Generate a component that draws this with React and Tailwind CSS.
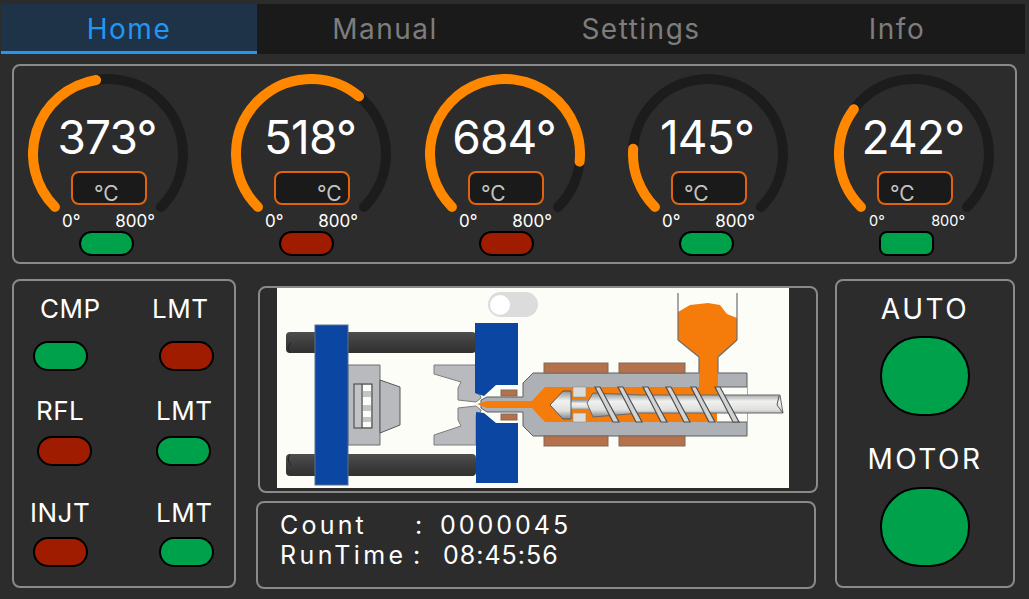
const R = 75;

function arcPoint(deg) {
  const a = ((deg - 90) * Math.PI) / 180;
  return [80 + R * Math.cos(a), 80 + R * Math.sin(a)];
}

function arcPath(from, to) {
  const [x1, y1] = arcPoint(from);
  const [x2, y2] = arcPoint(to);
  return `M${x1} ${y1} A${R} ${R} 0 ${to - from > 180 ? 1 : 0} 1 ${x2} ${y2}`;
}

function Led({ on, className = 'rounded-full' }) {
  return <div className={`w-[55px] h-full border-2 border-black ${className} ${on ? 'bg-[#00a14b]' : 'bg-[#a01c00]'}`} />;
}

function Gauge({ value, on, unitClass, ledClass, small, className = '' }) {
  const end = -135 + (value / 800) * 270;
  return (
    <div className={`w-[160px] shrink-0 flex flex-col items-center ${className}`}>
      <div className="relative w-[160px] h-[160px] shrink-0">
        <svg width="160" height="160" viewBox="0 0 160 160" fill="none" strokeWidth="10" strokeLinecap="round">
          <path d={arcPath(-135, 135)} stroke="#1c1c1c" />
          <path d={arcPath(-135, end)} stroke="#ff8800" />
        </svg>
        <div className="absolute left-0 right-[2px] top-[33px] text-center text-[46px] leading-[60px] text-white tracking-[-0.8px]">{value}°</div>
        <div className="absolute left-[43px] top-[97px] w-[76px] h-[34px] rounded-lg border-2 border-[#e0640f] bg-[#1a1a1a] text-[21px] leading-[30px] pt-[6px] text-[#c4c4c4] overflow-hidden">
          <span className={`block ${unitClass}`}>°C</span>
        </div>
      </div>
      <div className={`w-full flex justify-between -mt-[23px] h-[20px] leading-[20px] text-white ${small ? 'text-[14.5px] pl-[35px] pr-[29px]' : 'text-[17px] pl-[34px] pr-[33px]'}`}>
        <span>0°</span>
        <span>800°</span>
      </div>
      <div className={`h-[25px] shrink-0 ${ledClass}`}>
        <Led on={on} className={small ? 'rounded-lg' : 'rounded-full'} />
      </div>
    </div>
  );
}

function LedCell({ label, on, textClass, ledClass }) {
  return (
    <div className="h-[100px]">
      <div className={`text-[26px] leading-[28px] tracking-[0.5px] text-white whitespace-nowrap ${textClass}`}>{label}</div>
      <div className={`h-[30px] ${ledClass}`}>
        <Led on={on} />
      </div>
    </div>
  );
}

// injection unit, drawn in page coordinates so the numbers read off the screenshot
function Machine() {
  const flights = [595, 618, 643, 666, 691, 715];
  return (
    <svg className="block" width="512" height="200" viewBox="277 288 512 200">
      <defs>
        <linearGradient id="shaft" x1="0" y1="0" x2="0" y2="1">
          <stop offset="0" stopColor="#8f9294" />
          <stop offset="0.35" stopColor="#f1f2f0" />
          <stop offset="0.7" stopColor="#e0e1df" />
          <stop offset="1" stopColor="#84878a" />
        </linearGradient>
        <linearGradient id="bar" x1="0" y1="0" x2="0" y2="1">
          <stop offset="0" stopColor="#4e4e4e" />
          <stop offset="0.5" stopColor="#3d3d3d" />
          <stop offset="1" stopColor="#303030" />
        </linearGradient>
      </defs>
      <rect x="277" y="288" width="512" height="200" fill="#fdfdf8" />

      <rect x="286" y="332" width="190" height="21" rx="4" fill="url(#bar)" />
      <rect x="286" y="454" width="190" height="22" rx="4" fill="url(#bar)" />
      <path d="M291 343Q286 347 290 353" stroke="#222222" strokeWidth="1" fill="none" />
      <path d="M291 465Q286 460 290 454" stroke="#222222" strokeWidth="1" fill="none" />

      <path d="M348 365H380V445H348Z" fill="#b8babd" stroke="#6b6d70" />
      <path d="M380 380L400 387V425L380 433Z" fill="#b8babd" stroke="#55575a" />
      <rect x="354" y="384" width="18" height="44" fill="#c2c4c6" stroke="#3c3c3c" />
      <path d="M362 384V428" stroke="#3c3c3c" />
      <rect x="363" y="385" width="8" height="6" fill="#fdfdf8" />
      <rect x="363" y="397" width="8" height="8" fill="#fdfdf8" />
      <rect x="363" y="411" width="8" height="6" fill="#fdfdf8" />
      <rect x="363" y="422" width="8" height="5" fill="#fdfdf8" />
      <rect x="315" y="325" width="33" height="160" fill="#0b46a3" stroke="#5a6e90" />

      <path d="M434 365H476V393L480 395L481 398L476 402L458 400V388L461 382L434 374Z" fill="#b8babd" stroke="#7a7c80" />
      <path d="M434 445H476V415L480 413L481 410L476 406L458 408V420L461 426L434 435Z" fill="#b8babd" stroke="#7a7c80" />
      <path d="M475 323H518V385H496L484 396L475 393Z" fill="#0b46a3" />
      <path d="M476 412L484 413L496 423H518V483H476Z" fill="#0b46a3" />

      <path d="M487 397H523V383L533 373H747V436H533L523 426V412H487L481 408V400Z" fill="#adb0b4" stroke="#5b5e62" />
      <rect x="501" y="390" width="16" height="6" fill="#b5714c" stroke="#7d6a5c" />
      <rect x="501" y="414" width="16" height="6" fill="#b5714c" stroke="#7d6a5c" />
      <rect x="544" y="363" width="64" height="10" fill="#b5714c" stroke="#7d6a5c" />
      <rect x="619" y="363" width="66" height="10" fill="#b5714c" stroke="#7d6a5c" />
      <rect x="544" y="436" width="64" height="10" fill="#b5714c" stroke="#7d6a5c" />
      <rect x="619" y="436" width="66" height="10" fill="#b5714c" stroke="#7d6a5c" />

      <path d="M477 404L487 401H532L545 387H732V422H545L532 408H487Z" fill="#f57c0a" />
      <path d="M717 387H747V422H717Z" fill="#fdfdf8" />
      <path d="M717 387H747M717 422H747" stroke="#5b5e62" />
      <path d="M678 312L690 305L708 303L720 305L727 314L737 318V340L718 357V396H699V357L678 340Z" fill="#f57c0a" />
      <path d="M678 293V340M737 293V340M678 340L699 357M737 340L718 357M718 357V373M699 357V373" stroke="#6d6d6d" strokeWidth="1.2" fill="none" />

      <rect x="573" y="387" width="13" height="10" fill="#dcdcda" stroke="#8a8d90" strokeWidth="0.6" />
      <rect x="573" y="413" width="13" height="9" fill="#dcdcda" stroke="#8a8d90" strokeWidth="0.6" />
      <rect x="570" y="400" width="20" height="10" fill="url(#shaft)" />
      <path d="M550 405L563 391H571V419H563Z" fill="url(#shaft)" stroke="#55575a" />
      <path d="M587 403L593 393L640 395H780L783 413H640L593 417Z" fill="url(#shaft)" stroke="#66686b" />
      <path d="M779 396L777 405L783 413" stroke="#55575a" fill="none" />
      {flights.map((x) => (
        <path key={x} d={`M${x} 387L${x + 5} 387L${x + 24} 422H${x + 18}Z`} fill="#d2d4d4" stroke="#4d4f52" strokeWidth="1.2" />
      ))}
    </svg>
  );
}

export default function App() {
  const tabs = ['Home', 'Manual', 'Settings', 'Info'];
  return (
    <div className="w-[1029px] h-[599px] overflow-hidden bg-[#2c2c2c] font-[Inter,sans-serif] pt-[4px]">
      <div className="flex ml-[1px] h-[50px]">
        {tabs.map((t, i) => (
          <div
            key={t}
            className={`w-[256px] flex items-center justify-center text-[28px] tracking-[1.5px] ${i === 0 ? 'bg-[#1e3347] text-[#2196f3] border-b-[3px] border-[#2196f3] pt-[3px]' : 'bg-[#1a1a1a] text-[#7d7d7d]'}`}
          >
            {t}
          </div>
        ))}
      </div>

      <div className="flex ml-[12px] mt-[10px] w-[1005px] h-[200px] rounded-lg border-2 border-[#8a8a8a] pl-[14px] pt-[8px]">
        <Gauge value={373} on unitClass="pl-[21px]" ledClass="-ml-[3px]" />
        <Gauge value={518} unitClass="pl-[41px]" ledClass="-ml-[9px]" className="ml-[43px]" />
        <Gauge value={684} unitClass="pl-[11px]" ledClass="ml-[3px]" className="ml-[34px]" />
        <Gauge value={145} on unitClass="pl-[11px]" ledClass="-ml-[3px]" className="ml-[43px]" />
        <Gauge value={242} on small unitClass="pl-[11px]" ledClass="-ml-[16px]" className="ml-[46px]" />
      </div>

      <div className="flex mt-[15px] ml-[12px]">
        <div className="w-[224px] h-[309px] rounded-lg border-2 border-[#8a8a8a] pt-[14px] grid grid-cols-[114px_1fr] grid-rows-[102px_102px_auto]">
          <LedCell label="CMP" on textClass="pl-[26px]" ledClass="ml-[19px] mt-[18px]" />
          <LedCell label="LMT" textClass="pl-[24px]" ledClass="ml-[31px] mt-[18px]" />
          <LedCell label="RFL" textClass="pl-[22px]" ledClass="ml-[23px] mt-[11px]" />
          <LedCell label="LMT" on textClass="pl-[28px]" ledClass="ml-[28px] mt-[11px]" />
          <LedCell label="INJT" textClass="pl-[16px]" ledClass="ml-[19px] mt-[10px]" />
          <LedCell label="LMT" on textClass="pl-[28px]" ledClass="ml-[31px] mt-[10px]" />
        </div>

        <div className="ml-[20px] w-[562px] pt-[7px]">
          <div className="relative ml-[2px] w-[560px] h-[207px] rounded-lg border-2 border-[#8a8a8a] pl-[17px] overflow-hidden">
            <Machine />
            <div className="absolute left-[228px] top-[4px] w-[50px] h-[25px] rounded-full bg-[#dcdcdc] flex items-center pl-[2px]">
              <div className="w-[20px] h-[20px] rounded-full bg-white" />
            </div>
          </div>
          <div className="mt-[8px] w-[560px] h-[88px] rounded-lg border-2 border-[#8a8a8a] pl-[22px] pt-[7px] text-[25px] leading-[30px] text-white">
            <div className="flex">
              <span className="w-[135px] tracking-[3.2px]">Count</span>
              <span className="w-[25px]">:</span>
              <span className="tracking-[3px]">0000045</span>
            </div>
            <div className="flex">
              <span className="w-[133px] tracking-[3.4px] whitespace-nowrap">RunTime</span>
              <span className="w-[30px]">:</span>
              <span className="tracking-[1px]">08:45:56</span>
            </div>
          </div>
        </div>

        <div className="ml-[17px] w-[180px] h-[309px] rounded-lg border-2 border-[#8a8a8a] flex flex-col items-center pt-[12px] text-[28px] leading-[32px] tracking-[2.5px] text-white">
          <div>AUTO</div>
          <div className="mt-[11px] w-[90px] h-[80px] rounded-[40px] border-2 border-black bg-[#00a14b]" />
          <div className="mt-[27px]">MOTOR</div>
          <div className="mt-[12px] w-[90px] h-[80px] rounded-[40px] border-2 border-black bg-[#00a14b]" />
        </div>
      </div>
    </div>
  );
}
